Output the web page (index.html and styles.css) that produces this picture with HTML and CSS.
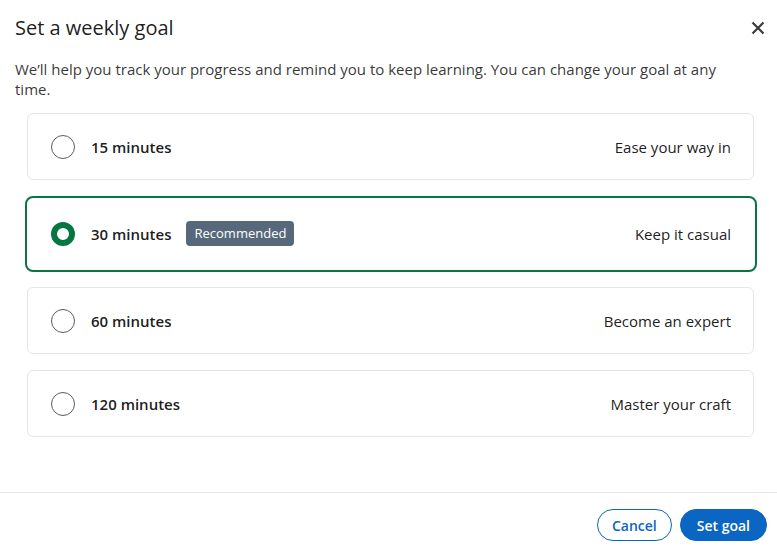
FILE: index.html
```html
<!DOCTYPE html>
<html lang="en">
<head>
<meta charset="utf-8">
<title>Set a weekly goal</title>
<link rel="stylesheet" href="styles.css">
</head>
<body>
<div class="dialog">
  <header class="dialog-header">
    <h2 class="dialog-title">Set a weekly goal</h2>
    <button class="close-btn" aria-label="Dismiss">
      <svg width="14" height="14" viewBox="0 0 14 14"><path d="M1.5 1.5 L12.5 12.5 M12.5 1.5 L1.5 12.5" stroke="#3b3b3b" stroke-width="2.2" stroke-linecap="butt" fill="none"/></svg>
    </button>
  </header>
  <div class="dialog-body">
    <p class="intro">We’ll help you track your progress and remind you to keep learning. You can change your goal at any time.</p>
    <ul class="options">
      <li class="option">
        <span class="radio"></span>
        <span class="label">15 minutes</span>
        <span class="hint">Ease your way in</span>
      </li>
      <li class="option selected">
        <span class="radio"></span>
        <span class="label">30 minutes</span>
        <span class="badge">Recommended</span>
        <span class="hint">Keep it casual</span>
      </li>
      <li class="option">
        <span class="radio"></span>
        <span class="label">60 minutes</span>
        <span class="hint">Become an expert</span>
      </li>
      <li class="option">
        <span class="radio"></span>
        <span class="label">120 minutes</span>
        <span class="hint">Master your craft</span>
      </li>
    </ul>
  </div>
  <footer class="dialog-footer">
    <button class="btn btn-secondary">Cancel</button>
    <button class="btn btn-primary">Set goal</button>
  </footer>
</div>
</body>
</html>
```

FILE: styles.css
```css
* { box-sizing: border-box; }
html, body { margin: 0; padding: 0; background: #fff; }
body {
  font-family: "Open Sans", "Noto Sans", sans-serif;
  color: rgba(0,0,0,0.9);
}
.dialog {
  width: 777px;
  height: 549px;
  display: flex;
  flex-direction: column;
}
.dialog-header {
  display: flex;
  align-items: center;
  justify-content: space-between;
  padding: 14px 10px 0 15px;
}
.dialog-title {
  margin: 0;
  font-size: 20px;
  font-weight: 400;
  line-height: 28px;
  color: rgba(0,0,0,0.9);
}
.close-btn {
  border: 0;
  background: none;
  padding: 0;
  width: 14px;
  height: 14px;
  margin-right: 2px;
  display: flex;
}
.dialog-body {
  flex: 1;
  padding: 0 23px 0 15px;
}
.intro {
  margin: 17px 0 0 0;
  font-size: 15px;
  line-height: 20px;
  color: rgba(0,0,0,0.8);
}
.options {
  list-style: none;
  margin: 14px 0 0 12px;
  padding: 0;
  display: flex;
  flex-direction: column;
  gap: 16px;
}
.option {
  display: flex;
  align-items: center;
  border: 1px solid #e6e6e6;
  border-radius: 6px;
  padding: 21px 22px 20px 23px;
  min-height: 67px;
}
.option.selected {
  border: 2px solid #0b7443;
  border-radius: 8px;
  margin: 0 -3px -1px -2px;
  padding: 23px 24px 24px 24px;
  min-height: 75px;
}
.radio {
  width: 24px;
  height: 24px;
  border-radius: 50%;
  border: 1px solid #5b5b5b;
  flex: none;
}
.selected .radio {
  border: 6px solid #057642;
  background: #fff;
}
.label {
  margin-left: 16px;
  font-size: 15px;
  font-weight: 600;
  color: rgba(0,0,0,0.9);
}
.badge {
  margin-left: 15px;
  background: #56687a;
  color: #fff;
  font-size: 13px;
  line-height: 25px;
  padding: 0 8px;
  border-radius: 4px;
}
.hint {
  margin-left: auto;
  font-size: 15px;
  color: rgba(0,0,0,0.9);
}
.dialog-footer {
  border-top: 1px solid #e8e8e8;
  display: flex;
  justify-content: flex-end;
  gap: 8px;
  padding: 16px 10px 8px;
}
.btn {
  font-family: inherit;
  font-size: 14px;
  font-weight: 600;
  height: 32px;
  border-radius: 16px;
  padding: 0 16px;
}
.btn-secondary {
  background: #fff;
  color: #0a66c2;
  border: 1px solid #0a66c2;
  padding: 0 14px;
}
.btn-primary {
  background: #0a66c2;
  color: #fff;
  border: 1px solid #0a66c2;
}
```
